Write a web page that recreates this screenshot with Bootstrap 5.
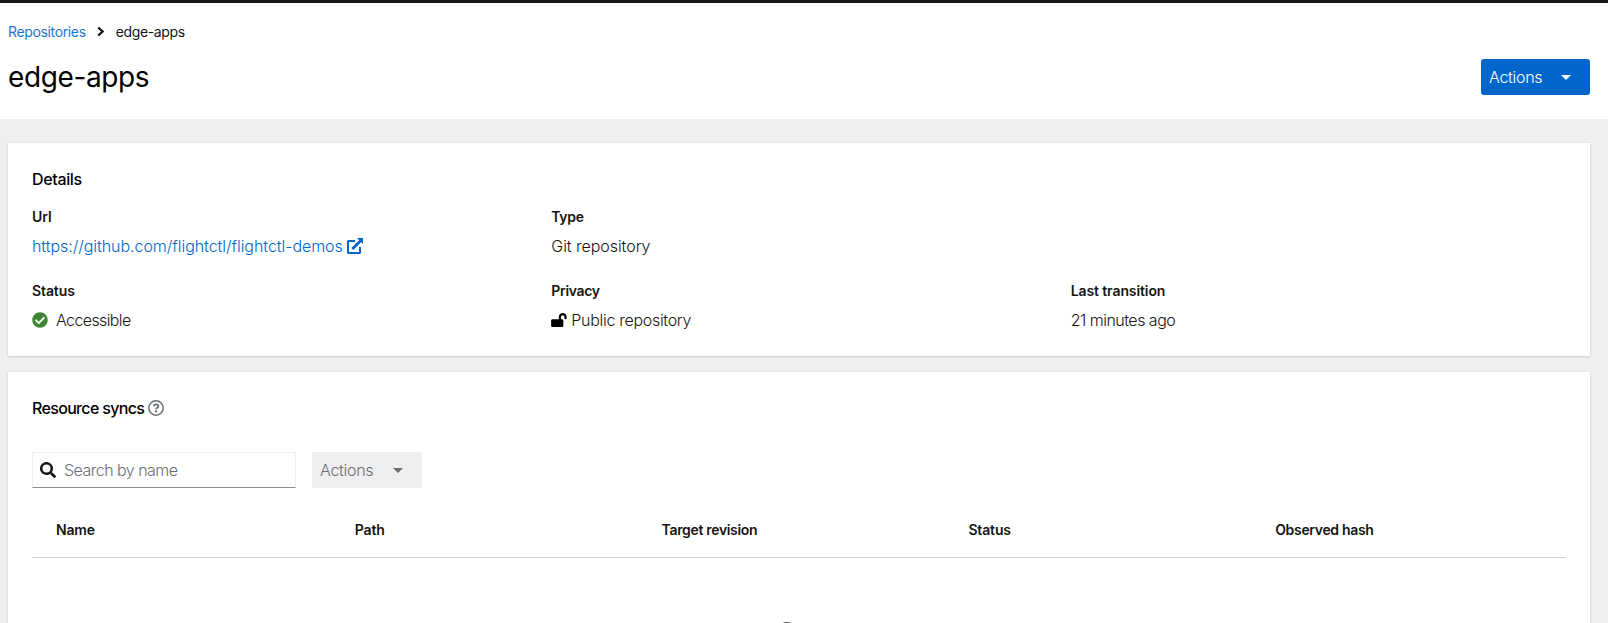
<!DOCTYPE html>
<html lang="en">
<head>
<meta charset="utf-8">
<meta name="viewport" content="width=device-width, initial-scale=1">
<title>edge-apps</title>
<link rel="stylesheet" href="https://cdn.jsdelivr.net/npm/bootstrap@5.3.0/dist/css/bootstrap.min.css">
<style>
html,body{height:100%;overflow:hidden}
body{font-family:"Inter","Liberation Sans",sans-serif;font-size:16px;line-height:24px;color:#151515;background:#efefef;font-weight:300}
a{color:#06c;text-decoration:none}
svg{fill:currentColor;flex-shrink:0}
.topbar{height:3px;background:#151515}
.masthead-area{height:116px;padding:18px 18px 24px 8px}
.crumbs{font-size:14px;line-height:21px;font-weight:400;letter-spacing:-.36px}
.crumbs a{color:#1a78d2}
.title-row{margin-top:17px}
.page-title{font-size:28px;line-height:36px;font-weight:400;color:#000;letter-spacing:-.38px}
.content-area{padding:24px 18px 0 8px}
.panel{border:0;border-radius:0;padding:24px;box-shadow:0 1px 2px rgba(3,3,3,.12),0 0 2px rgba(3,3,3,.06)}
.panel-main{height:213px}
.panel-sync{height:calc(100vh - 372px);padding-bottom:0}
.panel-title{font-size:16px;line-height:24px;font-weight:500;color:#000;letter-spacing:-.35px}
.t-sync{letter-spacing:-.67px}
.details-grid{display:grid;grid-template-columns:repeat(3,1fr);gap:24px;margin-top:17px}
.term{font-size:14px;line-height:18px;font-weight:600;margin-bottom:8px;letter-spacing:-.1px}
.detail-value{height:24px}
.t-url{letter-spacing:-.05px}
.t-git{letter-spacing:-.05px}
.t-acc{letter-spacing:-.62px}
.t-pub{letter-spacing:-.3px}
.t-ago{letter-spacing:-.51px}
.t-actions{letter-spacing:-.28px}
.t-tight,.sync-table th.t-tight{letter-spacing:-.33px}
.btn-actions{width:109px;height:36px;padding:0 19px 0 8px;border:0;border-radius:3px;font-weight:300;background:#06c;color:#fff}
.btn-muted,.btn-muted:disabled{width:110px;background:#efefef;color:#6a6e73;opacity:1;border-radius:0}
.toolbar-row{margin-top:32px}
.search-box{width:264px;height:36px;border:1px solid #efefef;border-bottom-color:#8a8d90;padding:0 7px}
.search-box input{font-weight:300;color:#151515;letter-spacing:-.52px}
.search-box input::placeholder{color:#6a6e73;opacity:1}
.sync-table{table-layout:fixed;margin-top:16px;--bs-table-bg:#fff}
.sync-table th{font-size:14px;line-height:21px;font-weight:600;height:53px;padding:0 16px 1px;border-bottom:1px solid #d2d2d2;color:#151515;vertical-align:middle;letter-spacing:-.15px}
.sync-table th:first-child{padding-left:24px}
.empty-icon{margin-left:745px;color:#4f5255}
</style>
<script src="https://cdn.jsdelivr.net/npm/bootstrap@5.3.0/dist/js/bootstrap.bundle.min.js"></script>
</head>
<body>
<div class="topbar"></div>
<header class="masthead-area bg-white">
  <nav class="crumbs d-flex align-items-center">
    <a href="#">Repositories</a>
    <svg class="mx-2" width="14" height="11" viewBox="0 0 14 11"><path d="M4.200 1.500 8.600 5.500 4.200 9.500" fill="none" stroke="#151515" stroke-width="2.300"/></svg>
    <span>edge-apps</span>
  </nav>
  <div class="title-row d-flex justify-content-between align-items-center">
    <h1 class="page-title m-0">edge-apps</h1>
    <button class="btn btn-actions d-flex align-items-center justify-content-between"><span class="t-actions">Actions</span><svg width="10" height="5" viewBox="0 0 10 5"><path d="M0 0h10L5 5z"/></svg></button>
  </div>
</header>
<main class="content-area">
  <section class="card panel panel-main mb-3">
    <h2 class="panel-title m-0">Details</h2>
    <div class="details-grid">
      <div><div class="term">Url</div><div class="detail-value d-flex align-items-center"><a href="#" class="t-url">https://github.com/flightctl/flightctl-demos</a><svg class="ms-1" width="16" height="16" viewBox="0 0 16 16" style="color:#06c"><path d="M8 2H1.500C.7 2 0 2.700 0 3.500v11c0 .8.700 1.500 1.500 1.500h11c.8 0 1.500-.7 1.500-1.500V9h-2v5H2V4h6z"/><path d="M10 0h6v6l-1.800-1.800-7.900 7.900-2-2 7.900-7.900z"/></svg></div></div>
      <div><div class="term t-tight">Type</div><div class="detail-value"><span class="t-git">Git repository</span></div></div>
      <div></div>
      <div><div class="term">Status</div><div class="detail-value d-flex align-items-center gap-2"><svg width="16" height="16" viewBox="0 0 512 512" style="color:#3e8635"><path d="M504 256c0 137-111 248-248 248S8 393 8 256 119 8 256 8s248 111 248 248zM227 387l184-184c6-6 6-16 0-23l-22-22c-7-7-17-7-23 0L216 308l-70-70c-6-6-16-6-23 0l-22 22c-7 7-7 17 0 23l104 104c6 6 16 6 22 0z"/></svg><span class="t-acc">Accessible</span></div></div>
      <div><div class="term t-tight">Privacy</div><div class="detail-value d-flex align-items-center gap-1"><svg width="16" height="14" viewBox="0 0 576 512" style="color:#000"><path d="M424 0c-80 0-144 66-144 145v79H48c-27 0-48 21-48 48v192c0 27 21 48 48 48h352c27 0 48-21 48-48V272c0-27-21-48-48-48h-40v-80c0-35 28-64 63-64s65 29 65 65v55c0 13 11 24 24 24h32c13 0 24-11 24-24v-55C576 65 504 0 424 0z"/></svg><span class="t-pub">Public repository</span></div></div>
      <div><div class="term">Last transition</div><div class="detail-value"><span class="t-ago">21 minutes ago</span></div></div>
    </div>
  </section>
  <section class="card panel panel-sync">
    <h2 class="panel-title m-0 d-flex align-items-center gap-1"><span class="t-sync">Resource syncs</span><svg width="16" height="16" viewBox="0 0 16 16" style="color:#6a6e73"><circle cx="8" cy="8" r="7.200" fill="none" stroke="currentColor" stroke-width="1.500"/><path d="M5.700 6.200C5.900 4.900 6.800 4.300 8.100 4.300c1.400 0 2.300.8 2.300 1.900 0 1.600-2.300 1.500-2.300 3" fill="none" stroke="currentColor" stroke-width="1.800"/><circle cx="8.100" cy="11.400" r="1.150"/></svg></h2>
    <div class="toolbar-row d-flex gap-3">
      <div class="search-box d-flex align-items-center gap-2"><svg width="16" height="16" viewBox="0 0 512 512"><path d="M505 443l-100-100c-4-4-10-7-17-7h-16a208 208 0 1 0-36 36v16c0 7 3 13 7 17l100 100c9 9 24 9 34 0l28-28c9-9 9-25 0-34zM208 336a128 128 0 1 1 0-256 128 128 0 0 1 0 256z"/></svg><input class="form-control border-0 p-0 shadow-none bg-transparent" placeholder="Search by name"></div>
      <button class="btn btn-actions btn-muted d-flex align-items-center justify-content-between" disabled><span class="t-actions">Actions</span><svg width="10" height="5" viewBox="0 0 10 5"><path d="M0 0h10L5 5z"/></svg></button>
    </div>
    <table class="table sync-table mb-0"><thead><tr><th>Name</th><th>Path</th><th class="t-tight">Target revision</th><th>Status</th><th class="t-tight">Observed hash</th></tr></thead></table>
    <svg class="empty-icon mt-auto" width="20" height="1" viewBox="0 0 20 1"><circle cx="10" cy="10.100" r="10"/></svg>
  </section>
</main>
</body>
</html>
